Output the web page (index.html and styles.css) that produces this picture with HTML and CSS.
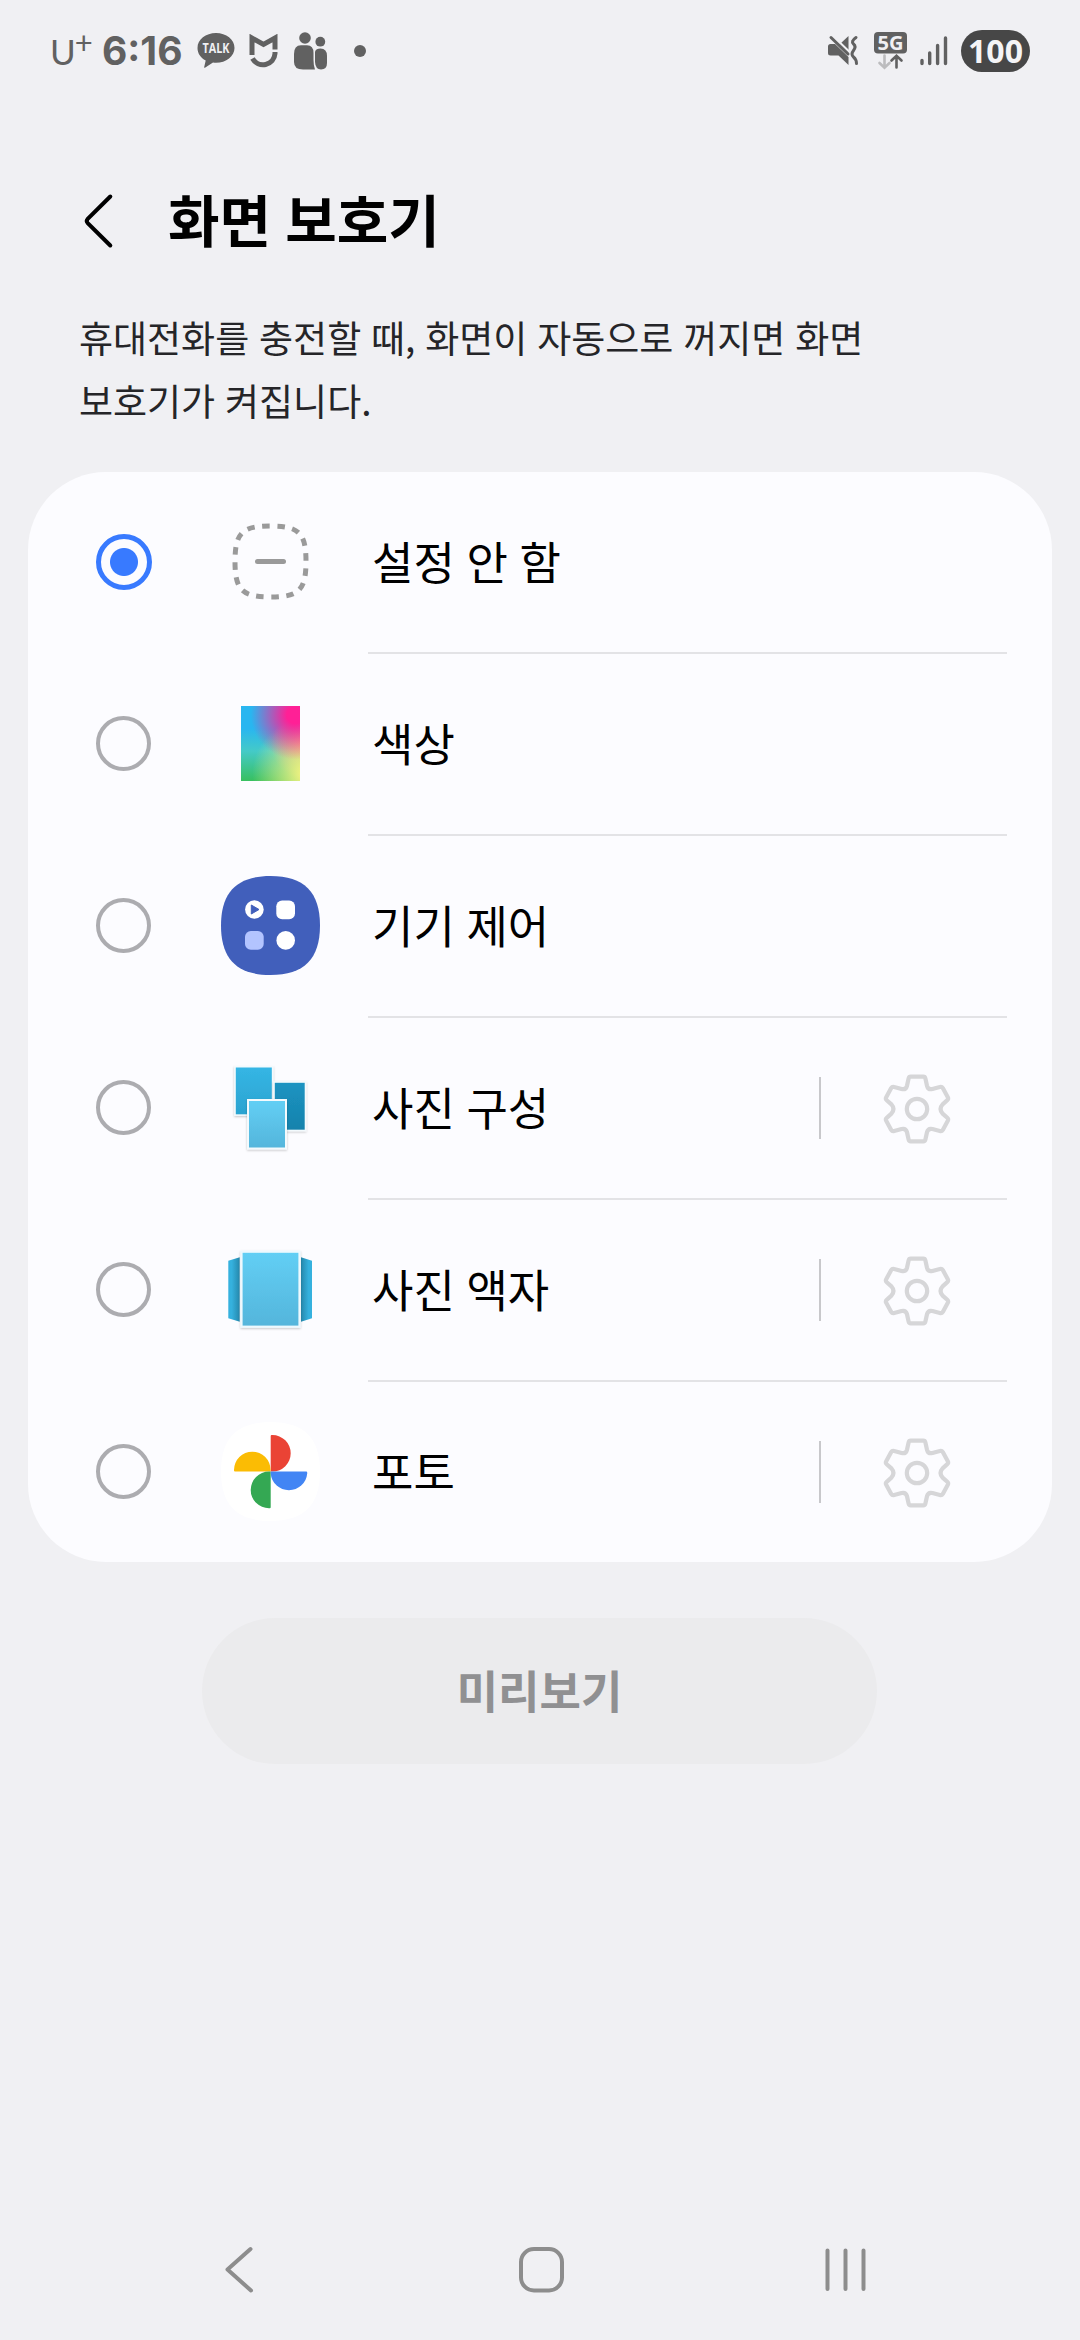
FILE: index.html
```html
<!DOCTYPE html>
<html lang="ko">
<head>
<meta charset="utf-8">
<title>화면 보호기</title>
<link rel="stylesheet" href="styles.css">
</head>
<body>
<svg width="0" height="0" class="defs">
  <defs>
    <symbol id="gear" viewBox="-36 -36 72 72">
      <g fill="none" stroke="#d6d6d8" stroke-width="4.2" stroke-linejoin="round">
        <path d="M-6.3-32.3H6.3Q8-32.3 8.4-30.5L10-23.2Q11.2-19 15.5-20L22.8-22Q24.8-22.6 25.8-21L30.8-11.8Q31.7-10 30.3-8.8L25.6-4.6Q21.5 0 25.6 4.6L30.3 8.8Q31.7 10 30.8 11.8L25.8 21Q24.8 22.6 22.8 22L15.5 20Q11.2 19 10 23.2L8.4 30.5Q8 32.3 6.3 32.3H-6.3Q-8 32.3-8.4 30.5L-10 23.2Q-11.2 19-15.5 20L-22.8 22Q-24.8 22.6-25.8 21L-30.8 11.8Q-31.7 10-30.3 8.8L-25.6 4.6Q-21.5 0-25.6-4.6L-30.3-8.8Q-31.7-10-30.8-11.8L-25.8-21Q-24.8-22.6-22.8-22L-15.5-20Q-11.2-19-10-23.2L-8.4-30.5Q-8-32.3-6.3-32.3Z"/>
        <circle r="10.2"/>
      </g>
    </symbol>
    <symbol id="squircle" viewBox="0 0 99 99">
      <path d="M49.5 0C83 0 99 16 99 49.5S83 99 49.5 99 0 83 0 49.5 16 0 49.5 0Z"/>
    </symbol>
    <linearGradient id="deep" x2="0" y2="1"><stop stop-color="#1c94c2"/><stop offset="1" stop-color="#1682ac"/></linearGradient>
    <linearGradient id="mid" x2="0" y2="1"><stop stop-color="#35b6e5"/><stop offset="1" stop-color="#2ba3d0"/></linearGradient>
    <linearGradient id="light" x2="0" y2="1"><stop stop-color="#62cff5"/><stop offset="1" stop-color="#54b5db"/></linearGradient>
    <linearGradient id="sideL"><stop offset=".3" stop-color="#35b1de"/><stop offset="1" stop-color="#2588ac"/></linearGradient>
    <linearGradient id="sideR"><stop stop-color="#2588ac"/><stop offset=".7" stop-color="#35b1de"/></linearGradient>
    <filter id="shade" x="-20%" y="-20%" width="140%" height="140%"><feDropShadow dx="0" dy="1" stdDeviation="1" flood-opacity=".22"/></filter>
  </defs>
</svg>

<header class="status">
  <div class="status-left">
    <span class="carrier">U<sup>+</sup></span>
    <span class="clock">6:16</span>
    <svg class="talk" width="38" height="36" viewBox="0 0 38 36"><path fill="#616161" d="M19 0c10.2 0 18.5 6.600 18.500 14.900S29.200 29.800 19 29.800c-1 0-2 0-3-.2L8.300 34.600c-.8.5-1.300.1-1.100-.7l1.500-6.400C3.700 24.900.5 20.200.5 14.900.5 6.600 8.800 0 19 0Z"/><text x="19" y="20.200" text-anchor="middle" textLength="27" lengthAdjust="spacingAndGlyphs">TALK</text></svg>
    <svg class="mi" width="30" height="34" viewBox="0 0 30 34"><g fill="none" stroke="#616161" stroke-width="5"><path d="M3 21V4L14.500 10.500 26 4V15.500"/><path d="M26 18V19.500A12 12 0 0 1 3.500 24.500"/></g></svg>
    <svg class="people" width="34" height="38" viewBox="0 0 34 38"><g fill="#616161"><circle cx="11" cy="6" r="5.800"/><circle cx="26.300" cy="9.700" r="4.900"/><path d="M0 22Q0 13.300 7 13.300H13Q19.500 13.300 19.500 21V28Q19.500 34 21 37.500H9Q0 37.500 0 30Z"/><path d="M21 19.500Q22 16.500 26.500 16.500 33 16.500 33 24V31Q33 37.500 27 37.500 21.500 37.500 21 30Z"/></g></svg>
    <span class="more-dot"></span>
  </div>
  <div class="status-right">
    <svg class="mute" width="31" height="32" viewBox="0 0 31 32"><g fill="#616161"><path d="M0 11.500Q0 9 2.500 9H7L20.500 22V30L10.500 20.500H2.500Q0 20.500 0 18Z"/><path d="M11.500 9.500 20.500 1V18Z"/></g><g fill="none" stroke-linecap="round"><path d="M5 1 21.500 17" stroke="#f0f0f3" stroke-width="2.400"/><path d="M3 2.500 20 19" stroke="#616161" stroke-width="3"/><path stroke="#616161" stroke-width="3" d="M28 2.500Q22.500 6.500 25.500 9T25.500 15.500 25.500 22 28.500 28.500"/></g></svg>
    <svg class="net" width="34" height="38" viewBox="0 0 34 38"><rect y="0" width="33" height="21.500" rx="4" fill="#616161"/><text x="16.500" y="17.800" text-anchor="middle" textLength="26" lengthAdjust="spacingAndGlyphs">5G</text><g fill="none" stroke-width="2.600" stroke-linecap="round"><path stroke="#bcbcbe" d="M10.500 23.500V35.500M5.500 31 10.500 35.800 15.500 31"/><path stroke="#616161" d="M22.500 35.500V24M17.500 28.500 22.500 23.700 27.500 28.500"/></g></svg>
    <svg class="signal" width="28" height="30" viewBox="0 0 28 30"><g stroke="#616161" stroke-width="3.400" stroke-linecap="round"><path d="M2 24.500V27.500M9.700 17V27.500M17.600 9.500V27.500M25.500 2V27.500"/></g></svg>
    <span class="battery">100</span>
  </div>
</header>

<main>
  <div class="title-bar">
    <svg width="32" height="56" viewBox="0 0 32 56"><path d="M27.300 3.500 4.500 26.200Q3 28 4.500 29.800L27.300 52.500" fill="none" stroke="#000" stroke-width="4" stroke-linecap="round"/></svg>
    <h1>화면 보호기</h1>
  </div>
  <p class="description">휴대전화를 충전할 때, 화면이 자동으로 꺼지면 화면<br>보호기가 켜집니다.</p>

  <ul class="card">
    <li class="row">
      <span class="radio checked"></span>
      <svg class="icon" viewBox="0 0 99 100"><path d="M49.500 14C78 14 85 21 85 49.500S78 85 49.500 85 14 78 14 49.500 21 14 49.500 14Z" fill="none" stroke="#9a9a9a" stroke-width="5" pathLength="32" stroke-dasharray="1 1" stroke-dashoffset="-.9"/><path d="M36.500 49.500H62.500" stroke="#9a9a9a" stroke-width="5" stroke-linecap="round"/></svg>
      <div class="body"><span class="label">설정 안 함</span></div>
    </li>
    <li class="row">
      <span class="radio"></span>
      <span class="icon"><span class="swatch"></span></span>
      <div class="body"><span class="label">색상</span></div>
    </li>
    <li class="row">
      <span class="radio"></span>
      <svg class="icon" viewBox="0 0 99 100"><use href="#squircle" width="99" height="99" fill="#415fbb"/><circle cx="33.400" cy="33.500" r="9.300" fill="#fff"/><path d="M30.300 29 38 33.500 30.300 38Z" fill="#415fbb" stroke="#415fbb" stroke-linejoin="round"/><rect x="55.300" y="24.500" width="18.700" height="18.700" rx="5.800" fill="#fff"/><rect x="24" y="55" width="18.700" height="18.700" rx="5.800" fill="#b3c4ff"/><circle cx="64.700" cy="64.400" r="9.300" fill="#fff"/></svg>
      <div class="body"><span class="label">기기 제어</span></div>
    </li>
    <li class="row">
      <span class="radio"></span>
      <svg class="icon" viewBox="0 0 99 100"><g stroke="#f3fafd" stroke-width="1.600"><g filter="url(#shade)"><rect x="14" y="8.700" width="37.600" height="48.400" fill="url(#mid)"/></g><g filter="url(#shade)"><rect x="53" y="24" width="31.500" height="48.500" fill="url(#deep)"/></g><g filter="url(#shade)"><rect x="27" y="42" width="38" height="48.500" fill="url(#light)" stroke-width="2"/></g></g></svg>
      <div class="body"><span class="label">사진 구성</span><span class="divider"></span><svg class="gear"><use href="#gear"/></svg></div>
    </li>
    <li class="row">
      <span class="radio"></span>
      <svg class="icon" viewBox="0 0 99 100"><path d="M7.300 20.700 18.700 17.300V81.700L7.300 78.300Z" fill="url(#sideL)"/><path d="M91 20.700 80 17.300V81.700L91 78.300Z" fill="url(#sideR)"/><g filter="url(#shade)"><rect x="20.500" y="11.700" width="58" height="75" fill="url(#light)" stroke="#edf9fe" stroke-width="2.200"/></g></svg>
      <div class="body"><span class="label">사진 액자</span><span class="divider"></span><svg class="gear"><use href="#gear"/></svg></div>
    </li>
    <li class="row">
      <span class="radio"></span>
      <svg class="icon" viewBox="0 0 99 100"><use href="#squircle" width="99" height="99" fill="#fff"/><path fill="#ea4335" d="M49.700 14Q49.700 13 50.700 13H51.400A18.300 18.300 0 0 1 51.400 49.600H49.700Z"/><path fill="#fbbc04" d="M14 49.600Q13 49.600 13 48.600V48A18.300 18.300 0 0 1 49.600 48V49.600Z"/><path fill="#34a853" d="M49.700 85.200Q49.700 86.200 48.700 86.200H48A18.300 18.300 0 0 1 48 49.600H49.700Z"/><path fill="#4285f4" d="M85.200 49.600Q86.200 49.600 86.200 50.600V51.200A18.300 18.300 0 0 1 49.700 51.200V49.600Z"/></svg>
      <div class="body"><span class="label">포토</span><span class="divider"></span><svg class="gear"><use href="#gear"/></svg></div>
    </li>
  </ul>

  <button class="preview" disabled>미리보기</button>
</main>

<nav class="nav">
  <svg width="48" height="56" viewBox="0 0 48 56"><path d="M38.500 8 15.500 28.500 39 49.500"/></svg>
  <svg width="48" height="56" viewBox="0 0 48 56"><rect x="4" y="8" width="41" height="41.500" rx="13"/></svg>
  <svg width="48" height="56" viewBox="0 0 48 56"><path d="M6.500 9.500V48M24.500 9.500V48M42.500 9.500V48"/></svg>
</nav>
</body>
</html>
```
FILE: styles.css
```css
* { box-sizing: border-box; }

body {
  margin: 0;
  width: 1080px;
  height: 2340px;
  display: flex;
  flex-direction: column;
  background: #f0f0f3;
  color: #000;
  font-family: "Noto Sans CJK KR", "Noto Sans", sans-serif;
}

svg { display: block; flex: none; }
.defs { position: absolute; }

/* Status bar */
.status {
  height: 102px;
  display: flex;
  justify-content: space-between;
  align-items: center;
  padding: 0 50px 0 49px;
  color: #616161;
}
.status-left, .status-right { display: flex; align-items: center; }
.carrier {
  width: 53px;
  padding-left: 1px;
  font: 400 35px/40px Lato, sans-serif;
  white-space: nowrap;
}
.carrier sup {
  font-size: 31px;
  line-height: 0;
  vertical-align: 11px;
  margin-left: -1px;
}
.clock {
  width: 80px;
  font: 700 39px/40px Inter, sans-serif;
}
.talk { margin-left: 15px; }
.talk text { font: 700 14px "Open Sans", sans-serif; fill: #f0f0f3; }
.mi { margin-left: 14px; }
.people { margin-left: 15px; }
.more-dot {
  width: 12px;
  height: 12px;
  margin-left: 26px;
  border-radius: 50%;
  background: #616161;
}
.net { margin-left: 15px; overflow: visible; }
.net text { font: 700 20px "Open Sans", sans-serif; fill: #f0f0f3; }
.signal { margin-left: 12px; }
.battery {
  width: 69px;
  height: 42px;
  margin-left: 13px;
  border-radius: 21px;
  background: #474747;
  color: #f4f4f6;
  font: 700 32px/42px "Open Sans", sans-serif;
  text-align: center;
}

/* Heading */
.title-bar {
  height: 118px;
  margin-top: 60px;
  padding-left: 83px;
  display: flex;
  align-items: center;
  gap: 53px;
}
h1 {
  margin: -6px 0 0;
  font-size: 56px;
  line-height: 80px;
  font-weight: 700;
  word-spacing: -1.500px;
}
.description {
  height: 126px;
  margin: 26px 0 40px;
  padding-left: 79px;
  color: #252528;
  font-size: 37px;
  line-height: 63px;
  word-spacing: -.500px;
}

/* Option list */
.card {
  margin: 0 28px;
  padding: 0;
  list-style: none;
  border-radius: 78px;
  background: #fcfcff;
}
.row {
  height: 182px;
  padding: 0 45px 0 68px;
  display: flex;
  align-items: stretch;
}
.row:last-child { height: 180px; }
.radio {
  width: 55px;
  height: 55px;
  margin-top: 62px;
  border: 4.500px solid #acacb0;
  border-radius: 50%;
}
.radio.checked {
  width: 56px;
  height: 56px;
  margin-right: -1px;
  border: 5px solid #387aff;
  background: radial-gradient(circle, #387aff 13.500px, transparent 14.500px);
}
.icon {
  width: 99px;
  height: 100px;
  margin: 40px 48px 0 70px;
  display: flex;
  justify-content: center;
  align-items: center;
}
.swatch {
  width: 59px;
  height: 75px;
  margin-top: -1px;
  background:
    radial-gradient(circle at 92% 12%, #ff2096 10%, rgba(255, 32, 150, 0) 52%),
    radial-gradient(circle at 112% 90%, #e8f080 8%, rgba(232, 240, 128, 0) 58%),
    radial-gradient(circle at 108% 52%, #ffa088 0, rgba(255, 160, 136, 0) 45%),
    linear-gradient(#29b6f0 30%, #44cac8 60%, #38c060);
}
.body {
  flex: 1;
  display: flex;
  align-items: center;
  border-bottom: 2px solid #e3e3e6;
}
.row:last-child .body { border-bottom: 0; }
.label {
  flex: 1;
  margin-top: -2px;
  padding-left: 4px;
  font-size: 45px;
  line-height: 66px;
  word-spacing: -1px;
}
.divider { width: 2px; height: 62px; background: #c8c8cb; }
.gear { width: 72px; height: 72px; margin: 2px 54px 0 60px; }

/* Preview button */
.preview {
  display: block;
  width: 675px;
  height: 146px;
  margin: 56px 0 0 202px;
  padding: 0 0 2px;
  border: 0;
  border-radius: 73px;
  background: #ebebed;
  color: #909092;
  font: 700 45px/66px "Noto Sans CJK KR", sans-serif;
}

/* System navigation */
.nav {
  margin-top: auto;
  padding: 0 211px 43px 212px;
  display: flex;
  justify-content: space-between;
}
.nav svg { fill: none; stroke: #8d8d8d; stroke-width: 4; stroke-linecap: round; stroke-linejoin: round; }
```
